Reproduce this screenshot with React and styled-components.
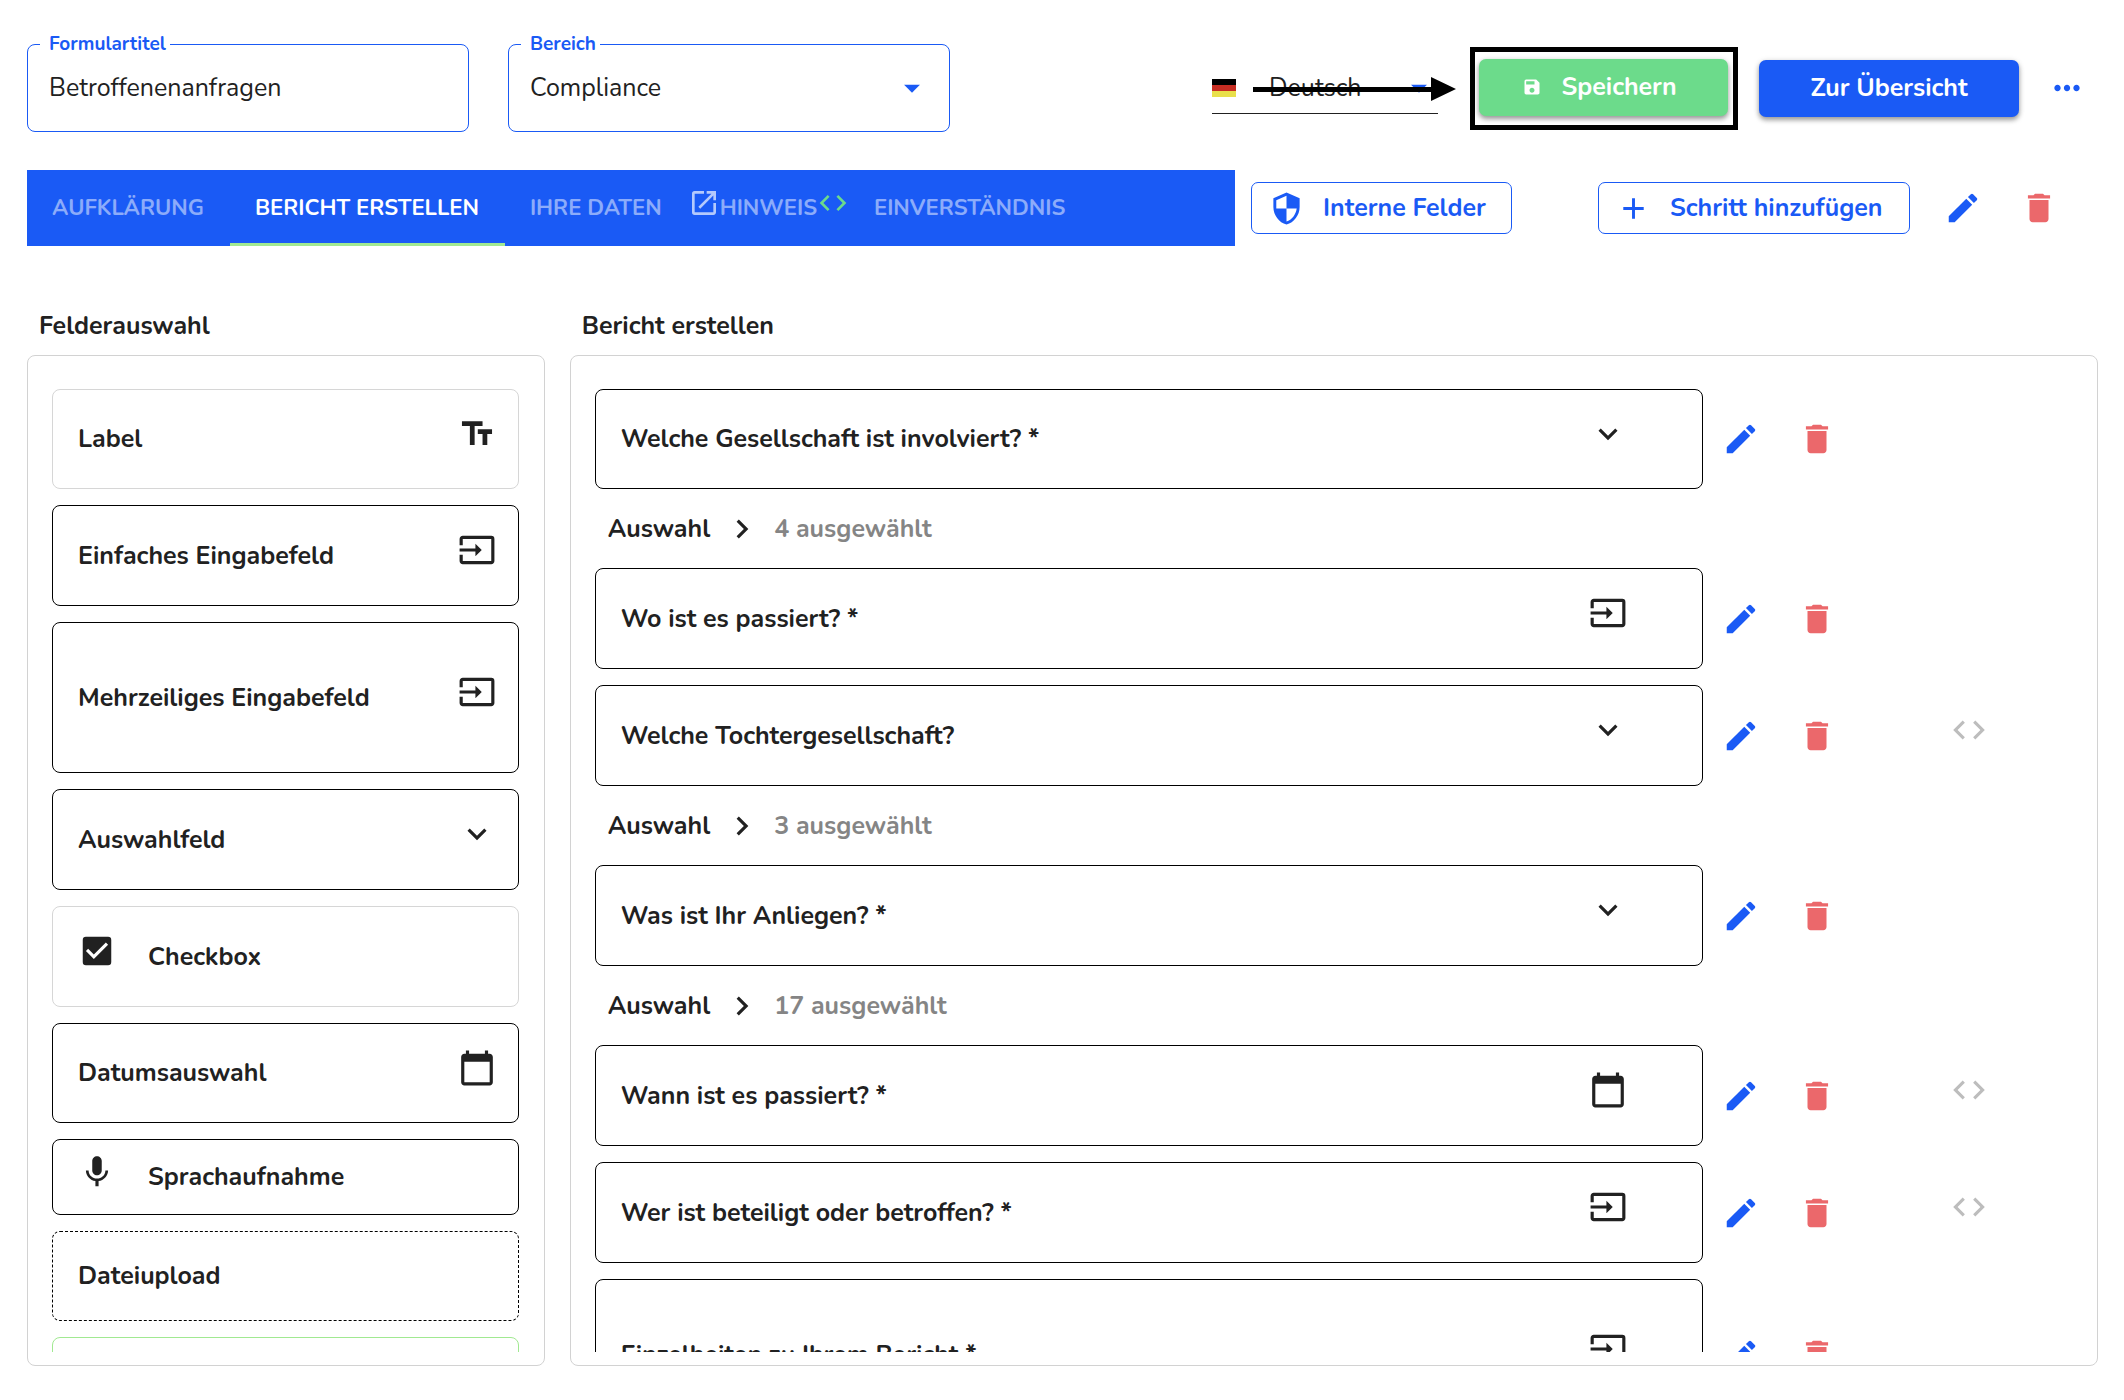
import { useState } from "react";
import styled, { createGlobalStyle, css } from "styled-components";
import {
    MdAdd,
    MdArrowDropDown,
    MdCalendarToday,
    MdCheckBox,
    MdChevronRight,
    MdCode,
    MdDelete,
    MdEdit,
    MdExpandMore,
    MdInput,
    MdMic,
    MdMoreHoriz,
    MdOpenInNew,
    MdSave,
    MdSecurity,
    MdTextFields,
} from "react-icons/md";

const blue = "#1a5af5";
const green = "#6cdb8b";
const red = "#eb686b";
const ink = "#212121";

const GlobalStyle = createGlobalStyle`
    * {
        box-sizing: border-box;
    }

    body {
        margin: 0;
        background: #fff;
        color: ${ink};
        font-family: Nunito, Lato, sans-serif;
        font-size: 25px;
        line-height: 34px;
    }

    button, input, select {
        font: inherit;
        color: inherit;
    }

    svg {
        display: block;
        flex-shrink: 0;
    }
`;

const Page = styled.main`
    display: flex;
    flex-direction: column;
    height: 100vh;
    padding: 44px 26px 34px 27px;
`;

const Header = styled.header`
    display: flex;
    align-items: center;
    gap: 39px;
`;

const Field = styled.div`
    position: relative;
    flex: 0 1 442px;
    height: 88px;
    border: 1px solid ${blue};
    border-radius: 8px;
`;

const FieldLabel = styled.label`
    position: absolute;
    top: -13px;
    left: 12px;
    padding: 0 4px 0 9px;
    background: #fff;
    color: ${blue};
    font-size: 19px;
    font-weight: 700;
    line-height: 24px;
`;

const controlStyle = css`
    width: 100%;
    height: 100%;
    padding: 0 21px;
    border: 0;
    outline: 0;
    background: none;
    appearance: none;
`;

const TextInput = styled.input`
    ${controlStyle}
`;

const Select = styled.select`
    ${controlStyle}
`;

const Caret = styled(MdArrowDropDown)`
    position: absolute;
    top: calc(50% - 19px);
    right: ${props => props.$inset}px;
    width: 38px;
    height: 38px;
    color: ${blue};
    pointer-events: none;
`;

const HeaderActions = styled.div`
    display: flex;
    align-items: center;
    margin-left: auto;
`;

const Language = styled.div`
    position: relative;
    display: flex;
    align-items: center;
    width: 226px;
    height: 52px;
    margin-right: 32px;
    border-bottom: 1px solid ${ink};
`;

const LanguageSelect = styled(Select)`
    padding: 0 0 0 33px;
`;

const Arrow = styled.svg`
    position: absolute;
    top: 14px;
    left: 41px;
    width: 203px;
    height: 26px;
    pointer-events: none;
`;

const Highlight = styled.div`
    margin-right: 21px;
    padding: 7px 5px 9px 4px;
    border: 5px solid #000;
`;

const Button = styled.button`
    display: flex;
    align-items: center;
    justify-content: center;
    gap: 19px;
    min-width: ${props => props.$minWidth}px;
    height: 57px;
    padding: 0 50px;
    border: 0;
    border-radius: 7px;
    background: ${props => props.$color};
    box-shadow: 0 3px 5px rgba(0, 0, 0, 0.35), 0 1px 6px rgba(0, 0, 0, 0.12);
    color: #fff;
    font-weight: 700;
    white-space: nowrap;
`;

const SaveButton = styled(Button)`
    padding-left: 42px;
`;

const OutlineButton = styled.button`
    display: flex;
    align-items: center;
    gap: 19px;
    min-width: ${props => props.$minWidth}px;
    height: 52px;
    padding: 0 24px 0 17px;
    border: 1px solid ${blue};
    border-radius: 7px;
    background: #fff;
    color: ${blue};
    font-weight: 700;
    white-space: nowrap;
`;

const IconButton = styled.button`
    display: flex;
    align-items: center;
    justify-content: center;
    width: ${props => props.$width || 76}px;
    height: 76px;
    padding: 0;
    border: 0;
    background: none;
    color: ${props => props.$color};
`;

const MoreButton = styled(IconButton)`
    margin-left: 17px;
`;

const StepBar = styled.div`
    display: flex;
    align-items: center;
    margin-top: 38px;
    padding-right: 21px;
`;

const Tabs = styled.nav`
    display: flex;
    flex: 1;
    height: 76px;
    margin-right: 16px;
    background: ${blue};
`;

const Tab = styled.button`
    display: flex;
    align-items: center;
    padding: ${props => (props.$tight ? "0" : "0 26px 0 25px")};
    border: 0;
    border-bottom: 3px solid ${props => (props.$active ? "#a1e991" : "transparent")};
    border-top: 3px solid transparent;
    background: none;
    color: ${props => (props.$active ? "#fff" : "rgba(255, 255, 255, 0.5)")};
    font-size: 22px;
    font-weight: 700;
    white-space: nowrap;

    & > svg {
        margin-bottom: 10px;
    }
`;

const StepActions = styled.div`
    display: flex;
    align-items: center;
    margin-left: 86px;

    & > ${OutlineButton} {
        margin-right: 15px;
    }
`;

const Columns = styled.div`
    display: flex;
    flex: 1;
    gap: 25px;
    min-height: 0;
    margin-top: 63px;
`;

const Column = styled.section`
    display: flex;
    flex-direction: column;
    flex: ${props => (props.$narrow ? "0 0 25%" : "1 1 0")};
    min-width: 0;

    & > h2 {
        margin: 0 0 12px;
        padding-left: 12px;
        font-size: 25px;
        font-weight: 700;
        line-height: 34px;
    }
`;

const Panel = styled.div`
    display: flex;
    flex: 1;
    min-height: 0;
    padding: 0 25px 13px 24px;
    border: 1px solid #d2d2d2;
    border-radius: 8px;
`;

const List = styled.ul`
    display: flex;
    flex: 1;
    flex-direction: column;
    gap: 16px;
    min-width: 0;
    margin: 0;
    padding: 33px 0 0;
    overflow-y: auto;
    scrollbar-width: none;
    list-style: none;
`;

const Card = styled.div`
    display: flex;
    align-items: center;
    justify-content: ${props => (props.$leading ? "flex-start" : "space-between")};
    gap: 32px;
    flex: ${props => (props.$question ? "0 0 75%" : "1 1 auto")};
    height: ${props => props.$height || 101}px;
    padding: 0 ${props => (props.$question ? 75 : 22)}px 0 25px;
    border: 1px ${props => props.$border || "solid #000"};
    border-radius: 8px;
    font-weight: 700;

    & > svg {
        margin-bottom: 11px;
    }
`;

const QuestionRow = styled.li`
    display: flex;
    align-items: center;
    flex-shrink: 0;
`;

const Condition = styled(IconButton)`
    margin-left: 76px;

    & > svg {
        margin-bottom: 11px;
    }
`;

const Choice = styled.li`
    display: flex;
    align-items: center;
    flex-shrink: 0;
    height: 47px;
    padding-left: 13px;
    font-weight: 700;

    & > svg {
        margin: 0 13px;
    }

    & > span:last-child {
        color: #858585;
    }
`;

const fields = [
    { label: "Label", icon: MdTextFields, height: 100, border: "solid #d6d6d6" },
    { label: "Einfaches Eingabefeld", icon: MdInput },
    { label: "Mehrzeiliges Eingabefeld", icon: MdInput, height: 151 },
    { label: "Auswahlfeld", icon: MdExpandMore },
    { label: "Checkbox", icon: MdCheckBox, leading: true, border: "solid #d6d6d6" },
    { label: "Datumsauswahl", icon: MdCalendarToday, height: 100 },
    { label: "Sprachaufnahme", icon: MdMic, leading: true, height: 76 },
    { label: "Dateiupload", height: 90, border: "dashed #000" },
    { label: "", border: "solid #a1e991" },
];

const questions = [
    { label: "Welche Gesellschaft ist involviert? *", icon: MdExpandMore, height: 100, selected: 4 },
    { label: "Wo ist es passiert? *", icon: MdInput },
    { label: "Welche Tochtergesellschaft?", icon: MdExpandMore, selected: 3, condition: true },
    { label: "Was ist Ihr Anliegen? *", icon: MdExpandMore, selected: 17 },
    { label: "Wann ist es passiert? *", icon: MdCalendarToday, condition: true },
    { label: "Wer ist beteiligt oder betroffen? *", icon: MdInput, condition: true },
    { label: "Einzelheiten zu Ihrem Bericht *", icon: MdInput, height: 151 },
];

const Flag = () => (
    <svg width="24" height="18" viewBox="0 0 24 18" aria-hidden="true">
        <rect width="24" height="6" fill="#000" />
        <rect y="6" width="24" height="6" fill="#c62d23" />
        <rect y="12" width="24" height="6" fill="#e9e04b" />
    </svg>
);

const EditButton = () => (
    <IconButton type="button" $color={blue} aria-label="Bearbeiten">
        <MdEdit size={38} />
    </IconButton>
);

const DeleteButton = () => (
    <IconButton type="button" $color={red} aria-label="Löschen">
        <MdDelete size={38} />
    </IconButton>
);

const FieldCard = ({ label, icon: Icon, leading, height, border }) => (
    <li>
        <Card $leading={leading} $height={height} $border={border}>
            {leading && <Icon size={38} />}
            <span>{label}</span>
            {!leading && Icon && <Icon size={38} />}
        </Card>
    </li>
);

const Question = ({ label, icon: Icon, height, selected, condition }) => (
    <>
        <QuestionRow>
            <Card $question $height={height}>
                <span>{label}</span>
                <Icon size={38} />
            </Card>
            <EditButton />
            <DeleteButton />
            {condition && (
                <Condition type="button" $color="#bdbdbd" aria-label="Bedingung">
                    <MdCode size={38} />
                </Condition>
            )}
        </QuestionRow>
        {selected && (
            <Choice>
                <span>Auswahl</span>
                <MdChevronRight size={38} />
                <span>{selected} ausgewählt</span>
            </Choice>
        )}
    </>
);

const App = () => {
    const [title, setTitle] = useState("Betroffenenanfragen");
    const [step, setStep] = useState("bericht");

    const tabProps = name => ({
        type: "button",
        $active: step === name,
        onClick: () => setStep(name),
    });

    return (
        <Page>
            <GlobalStyle />
            <Header>
                <Field>
                    <FieldLabel htmlFor="title">Formulartitel</FieldLabel>
                    <TextInput id="title" value={title} onChange={e => setTitle(e.target.value)} />
                </Field>
                <Field>
                    <FieldLabel htmlFor="area">Bereich</FieldLabel>
                    <Select id="area">
                        <option>Compliance</option>
                    </Select>
                    <Caret $inset={18} />
                </Field>
                <HeaderActions>
                    <Language>
                        <Flag />
                        <LanguageSelect aria-label="Sprache">
                            <option>Deutsch</option>
                        </LanguageSelect>
                        <Caret $inset={0} />
                        <Arrow viewBox="0 0 203 26" aria-hidden="true">
                            <path d="M0 11h178V1l25 12-25 12v-9H0z" />
                        </Arrow>
                    </Language>
                    <Highlight>
                        <SaveButton type="button" $color={green} $minWidth={249}>
                            <MdSave size={20} />
                            Speichern
                        </SaveButton>
                    </Highlight>
                    <Button type="button" $color={blue} $minWidth={260}>Zur Übersicht</Button>
                    <MoreButton type="button" $color={blue} $width={62} aria-label="Mehr">
                        <MdMoreHoriz size={38} />
                    </MoreButton>
                </HeaderActions>
            </Header>

            <StepBar>
                <Tabs>
                    <Tab {...tabProps("aufklaerung")}>AUFKLÄRUNG</Tab>
                    <Tab {...tabProps("bericht")}>BERICHT ERSTELLEN</Tab>
                    <Tab {...tabProps("daten")}>IHRE DATEN</Tab>
                    <Tab {...tabProps("hinweis")} $tight>
                        <MdOpenInNew size={32} color="#b4c9fc" />
                        HINWEIS
                        <MdCode size={32} color={green} />
                    </Tab>
                    <Tab {...tabProps("einverstaendnis")}>EINVERSTÄNDNIS</Tab>
                </Tabs>
                <OutlineButton type="button" $minWidth={261}>
                    <MdSecurity size={35} />
                    Interne Felder
                </OutlineButton>
                <StepActions>
                    <OutlineButton type="button" $minWidth={312}>
                        <MdAdd size={35} />
                        Schritt hinzufügen
                    </OutlineButton>
                    <EditButton />
                    <DeleteButton />
                </StepActions>
            </StepBar>

            <Columns>
                <Column $narrow>
                    <h2>Felderauswahl</h2>
                    <Panel>
                        <List>
                            {fields.map((field, i) => <FieldCard key={i} {...field} />)}
                        </List>
                    </Panel>
                </Column>
                <Column>
                    <h2>Bericht erstellen</h2>
                    <Panel>
                        <List>
                            {questions.map((question, i) => <Question key={i} {...question} />)}
                        </List>
                    </Panel>
                </Column>
            </Columns>
        </Page>
    );
}

export default App;
